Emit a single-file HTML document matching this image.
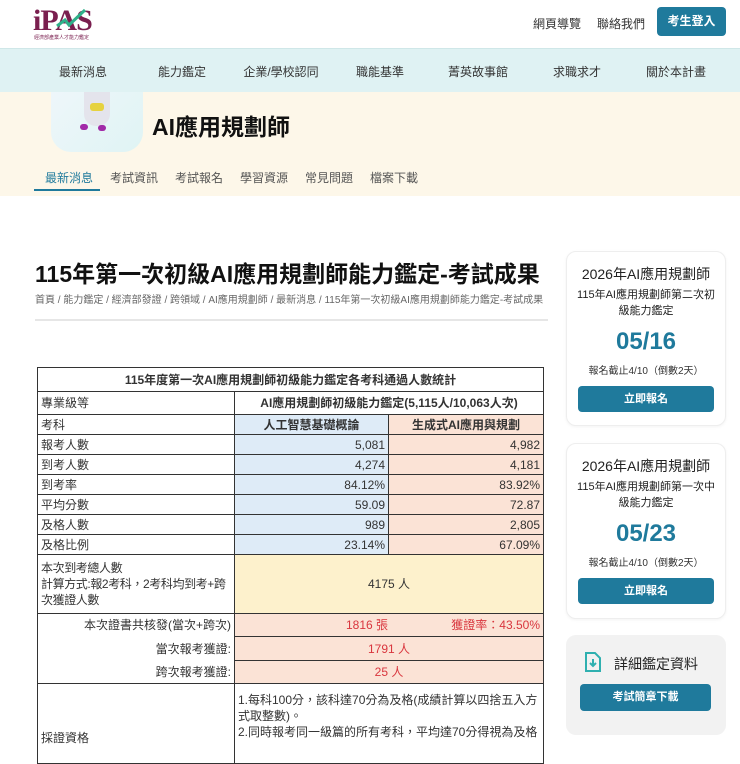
<!DOCTYPE html>
<html><head><meta charset="utf-8">
<style>
*{margin:0;padding:0;box-sizing:border-box}
body{width:740px;height:730px;overflow:hidden;background:#fff;font-family:"Liberation Sans","Noto Sans CJK TC",sans-serif;color:#222;position:relative}
.abs{position:absolute}
.nav a{position:absolute;top:63px;font-size:12px;color:#333;transform:translateX(-50%)}
.tabs span{position:absolute;top:169px;font-size:12px;color:#555}
table{position:absolute;left:37px;top:367px;width:507px;border-collapse:collapse;font-size:12px;color:#333}
td{border:1px solid #333;padding:0 3px;height:20px;line-height:18px}
.b{background:#deebf7;text-align:right}
.o{background:#fbe3d6;text-align:right}
.c{text-align:center}
.red{color:#d9363e}
.card{position:absolute;left:566px;width:160px;background:#fff;border:1px solid #eee;border-radius:10px;text-align:center;box-shadow:0 1px 3px rgba(0,0,0,.05)}
.card .t{font-size:14px;color:#222;margin-top:12px}
.card .s{font-size:11px;color:#222;line-height:16px;margin-top:3px;padding:0 6px}
.card .d{font-size:24px;font-weight:bold;color:#1f7a9c;margin-top:9px}
.card .n{font-size:10px;color:#333;margin-top:6px}
.btn{background:#1f7a9c;color:#fff;font-size:11px;font-weight:bold;border-radius:4px;height:26px;line-height:26px;margin:9px 11px 0}
</style></head><body>
<div class="abs" style="left:33px;top:4px;font-family:'Liberation Serif',serif;font-size:30px;color:#7a1f4f;letter-spacing:-1px;font-weight:bold">iPAS</div>
<svg class="abs" style="left:55px;top:8px" width="32" height="24"><path d="M2 18 L10 12 L14 17 L30 2" stroke="#2fb08a" stroke-width="3" fill="none"/></svg>
<div class="abs" style="left:34px;top:34px;font-size:5px;color:#7a1f4f">經濟部產業人才能力鑑定</div>
<div class="abs" style="left:533px;top:15px;font-size:12px;color:#333">網頁導覽</div>
<div class="abs" style="left:597px;top:15px;font-size:12px;color:#333">聯絡我們</div>
<div class="abs" style="left:657px;top:7px;width:69px;height:29px;background:#1f7a9c;border-radius:4px;color:#fff;font-size:12px;font-weight:bold;text-align:center;line-height:29px">考生登入</div>
<div class="abs" style="left:0;top:48px;width:740px;height:44px;background:#dff2f3;border-top:1px solid #cfe7e8"></div>
<div class="nav">
<a style="left:83px">最新消息</a><a style="left:182px">能力鑑定</a><a style="left:281px">企業/學校認同</a><a style="left:380px">職能基準</a><a style="left:478px">菁英故事館</a><a style="left:577px">求職求才</a><a style="left:676px">關於本計畫</a>
</div>
<div class="abs" style="left:0;top:92px;width:740px;height:104px;background:#fdf7e9"></div>
<div class="abs" style="left:51px;top:92px;width:92px;height:60px;background:linear-gradient(135deg,#eef6fa,#dff4f4);border-radius:0 0 20px 20px"></div>
<div class="abs" style="left:84px;top:92px;width:26px;height:34px;background:#e4e4ec;border-radius:0 0 12px 12px"></div>
<div class="abs" style="left:90px;top:103px;width:14px;height:8px;background:#e6d240;border-radius:3px"></div>
<div class="abs" style="left:80px;top:124px;width:8px;height:6px;background:#a12aa8;border-radius:3px"></div>
<div class="abs" style="left:98px;top:125px;width:8px;height:6px;background:#a12aa8;border-radius:3px"></div>
<div class="abs" style="left:152px;top:108px;font-size:23px;font-weight:bold;color:#111">AI應用規劃師</div>
<div class="tabs">
<span style="left:45px;color:#1f7a9c">最新消息</span><span style="left:110px">考試資訊</span><span style="left:175px">考試報名</span><span style="left:240px">學習資源</span><span style="left:305px">常見問題</span><span style="left:370px">檔案下載</span>
</div>
<div class="abs" style="left:34px;top:189px;width:66px;height:2px;background:#1f7a9c"></div>
<div class="abs" style="left:35px;top:255px;font-size:23px;font-weight:bold;color:#111;white-space:nowrap">115年第一次初級AI應用規劃師能力鑑定-考試成果</div>
<div class="abs" style="left:35px;top:291px;font-size:10px;color:#666;white-space:nowrap">首頁 / 能力鑑定 / 經濟部發證 / 跨領域 / AI應用規劃師 / 最新消息 / 115年第一次初級AI應用規劃師能力鑑定-考試成果</div>
<div class="abs" style="left:35px;top:319px;width:513px;height:2px;background:#e6e6e6"></div>
<table>
<tr><td colspan="3" class="c" style="height:24px;font-weight:bold">115年度第一次AI應用規劃師初級能力鑑定各考科通過人數統計</td></tr>
<tr><td style="width:197px;height:23px">專業級等</td><td colspan="2" class="c" style="font-weight:bold">AI應用規劃師初級能力鑑定(5,115人/10,063人次)</td></tr>
<tr><td>考科</td><td class="b c" style="width:154px;font-weight:bold">人工智慧基礎概論</td><td class="o c" style="font-weight:bold">生成式AI應用與規劃</td></tr>
<tr><td>報考人數</td><td class="b">5,081</td><td class="o">4,982</td></tr>
<tr><td>到考人數</td><td class="b">4,274</td><td class="o">4,181</td></tr>
<tr><td>到考率</td><td class="b">84.12%</td><td class="o">83.92%</td></tr>
<tr><td>平均分數</td><td class="b">59.09</td><td class="o">72.87</td></tr>
<tr><td>及格人數</td><td class="b">989</td><td class="o">2,805</td></tr>
<tr><td>及格比例</td><td class="b">23.14%</td><td class="o">67.09%</td></tr>
<tr><td style="height:59px;line-height:16px;letter-spacing:-0.4px">本次到考總人數<br>計算方式:報2考科，2考科均到考+跨<br>次獲證人數</td><td colspan="2" class="c" style="background:#fdf1cc">4175 人</td></tr>
<tr><td style="text-align:right;height:23px;border-bottom:none">本次證書共核發(當次+跨次)</td><td colspan="2" style="background:#fbe3d6" class="red"><span style="margin-left:108px">1816 張</span><span style="float:right">獲證率：43.50%</span></td></tr>
<tr><td style="text-align:right;height:24px;border-top:none;border-bottom:none">當次報考獲證:</td><td colspan="2" class="c red" style="background:#fbe3d6">1791 人</td></tr>
<tr><td style="text-align:right;height:23px;border-top:none">跨次報考獲證:</td><td colspan="2" class="c red" style="background:#fbe3d6">25 人</td></tr>
<tr><td style="height:80px;padding-top:28px">採證資格</td><td colspan="2" style="vertical-align:top;padding-top:8px;line-height:16px">1.每科100分，該科達70分為及格(成績計算以四捨五入方式取整數)。<br>2.同時報考同一級篇的所有考科，平均達70分得視為及格</td></tr>
</table>
<div class="card" style="top:251px;height:175px">
<div class="t">2026年AI應用規劃師</div>
<div class="s">115年AI應用規劃師第二次初級能力鑑定</div>
<div class="d">05/16</div>
<div class="n">報名截止4/10（倒數2天）</div>
<div class="btn">立即報名</div>
</div>
<div class="card" style="top:443px;height:176px">
<div class="t">2026年AI應用規劃師</div>
<div class="s">115年AI應用規劃師第一次中級能力鑑定</div>
<div class="d">05/23</div>
<div class="n">報名截止4/10（倒數2天）</div>
<div class="btn">立即報名</div>
</div>
<div class="abs" style="left:566px;top:635px;width:160px;height:100px;background:#f2f2f2;border-radius:10px"></div>
<svg class="abs" style="left:584px;top:651px" width="18" height="22" viewBox="0 0 18 22"><path d="M2 2h9l5 5v13H2z" fill="none" stroke="#2fb0b0" stroke-width="2"/><path d="M9 8v7M6 12l3 3 3-3" fill="none" stroke="#2fb0b0" stroke-width="2"/></svg>
<div class="abs" style="left:614px;top:654px;font-size:14px;color:#222">詳細鑑定資料</div>
<div class="abs" style="left:580px;top:684px;width:131px;height:27px;background:#1f7a9c;border-radius:4px;color:#fff;font-size:11px;font-weight:bold;text-align:center;line-height:27px">考試簡章下載</div>
</body></html>
